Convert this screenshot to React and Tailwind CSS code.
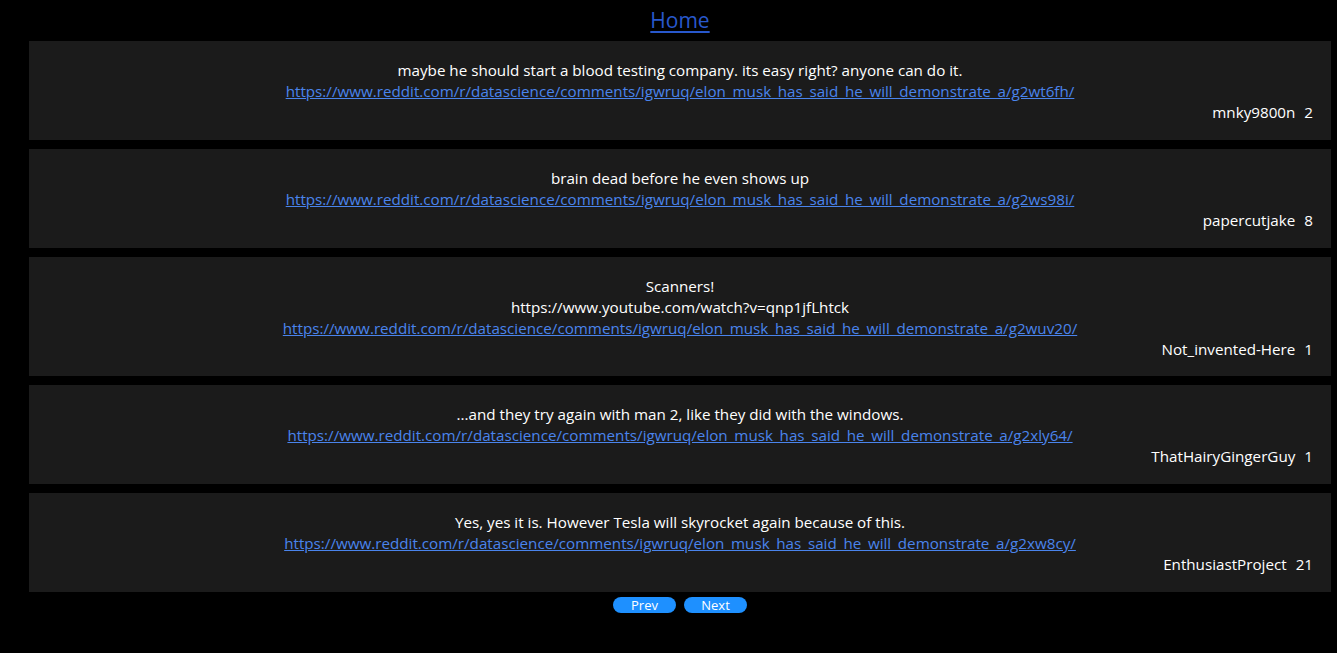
import React from "react";

const items = [
  { text: ["maybe he should start a blood testing company. its easy right? anyone can do it."], id: "g2wt6fh", author: "mnky9800n", score: 2 },
  { text: ["brain dead before he even shows up"], id: "g2ws98i", author: "papercutjake", score: 8 },
  { text: ["Scanners!", "https://www.youtube.com/watch?v=qnp1jfLhtck"], id: "g2wuv20", author: "Not_invented-Here", score: 1 },
  { text: ["...and they try again with man 2, like they did with the windows."], id: "g2xly64", author: "ThatHairyGingerGuy", score: 1 },
  { text: ["Yes, yes it is. However Tesla will skyrocket again because of this."], id: "g2xw8cy", author: "EnthusiastProject", score: 21 },
];

export default function App() {
  return (
    <div className="min-h-[653px] bg-black text-white" style={{ fontFamily: '"Open Sans", "Noto Sans", sans-serif' }}>
      <div className="ml-[29px] w-[1302px] flex flex-col">
        <div className="h-[41px] flex items-center justify-center overflow-hidden">
          <a href="#" className="text-[21px] leading-none text-[#2858cc] underline underline-offset-[3px]">Home</a>
        </div>
        <div className="flex flex-col gap-[9px]">
          {items.map((it) => {
            const url = `https://www.reddit.com/r/datascience/comments/igwruq/elon_musk_has_said_he_will_demonstrate_a/${it.id}/`;
            return (
              <div key={it.id} className={`bg-[#1b1b1b] pt-[19px] px-[18px] text-[15.2px] leading-[21px] ${it.text.length > 1 ? "pb-[16px]" : "pb-[17px]"}`}>
                {it.text.map((t, i) => (
                  <div key={i} className="text-center h-[21px]">{t}</div>
                ))}
                <div className="text-center h-[21px]">
                  <a href="#" className="text-[#4a84ec] underline">{url}</a>
                </div>
                <div className="text-right h-[21px]">
                  <span>{it.author}</span>
                  <span className="ml-[9px]">{it.score}</span>
                </div>
              </div>
            );
          })}
        </div>
        <div className="flex justify-center gap-2 mt-[5px]">
          <button className="w-[63px] h-[16px] rounded-full bg-[#1e90ff] text-white text-[13px] leading-[16px]">Prev</button>
          <button className="w-[63px] h-[16px] rounded-full bg-[#1e90ff] text-white text-[13px] leading-[16px]">Next</button>
        </div>
      </div>
    </div>
  );
}
